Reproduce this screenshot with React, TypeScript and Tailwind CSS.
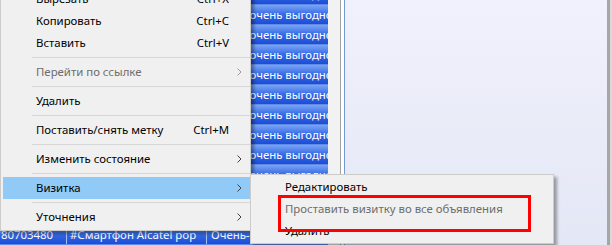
import React from "react";

type Item =
  | { sep: true }
  | { label: string; shortcut?: string; sub?: boolean; disabled?: boolean; active?: boolean };

const mainItems: Item[] = [
  { label: "Вырезать", shortcut: "Ctrl+X" },
  { label: "Копировать", shortcut: "Ctrl+C" },
  { label: "Вставить", shortcut: "Ctrl+V" },
  { sep: true },
  { label: "Перейти по ссылке", sub: true, disabled: true },
  { sep: true },
  { label: "Удалить" },
  { sep: true },
  { label: "Поставить/снять метку", shortcut: "Ctrl+M" },
  { sep: true },
  { label: "Изменить состояние", sub: true },
  { sep: true },
  { label: "Визитка", sub: true, active: true },
  { sep: true },
  { label: "Уточнения", sub: true },
];

const subItems: Item[] = [
  { label: "Редактировать" },
  { label: "Проставить визитку во все объявления", disabled: true },
  { label: "Удалить" },
];

function Chevron({ disabled }: { disabled?: boolean }) {
  return (
    <svg width="5" height="8" viewBox="0 0 5 8" className="shrink-0">
      <path d="M0.5 0.5 L4 4 L0.5 7.5" fill="none" stroke={disabled ? "#9a9a9a" : "#404040"} strokeWidth="1" />
    </svg>
  );
}

function MenuRow({ item }: { item: Item }) {
  if ("sep" in item) {
    return (
      <div className="h-[7px] flex flex-col justify-center pl-[29px]">
        <div className="h-px bg-[#d7d7d7]" />
      </div>
    );
  }
  return (
    <div
      className={`h-[22px] flex items-center pl-[33px] pr-[8px] ${
        item.active ? "bg-[#91c9f7]" : ""
      } ${item.disabled ? "text-[#6d6d6d]" : "text-black"}`}
    >
      <span className="flex-1 whitespace-nowrap">{item.label}</span>
      {item.shortcut && <span className="mr-[13px] whitespace-nowrap">{item.shortcut}</span>}
      {item.sub && <Chevron disabled={item.disabled} />}
    </div>
  );
}

function GridRow({ last }: { last?: boolean }) {
  return (
    <div className="h-[20px] flex text-white">
      <div className="w-[328px] flex bg-gradient-to-b from-[#7aa4f5] via-[#3569e6] to-[#1a4dd5] border-b border-[#5f8ae8]">
        <div className="w-[67px] overflow-hidden whitespace-nowrap flex items-center pl-[1px] border-r border-[#a9c1f3]">
          {last ? "80703480" : ""}
        </div>
        <div className="w-[140px] overflow-hidden whitespace-nowrap flex items-center pl-[3px] border-r border-[#a9c1f3]">
          #Смартфон Alcatel pop
        </div>
        <div className="flex-1 overflow-hidden whitespace-nowrap flex items-center pl-[4px]">
          Очень-очень выгодное
        </div>
      </div>
      <div className="flex-1 bg-[#f2f2f2]" />
    </div>
  );
}

export default function App() {
  return (
    <div
      className="relative w-[612px] h-[245px] overflow-hidden text-[11.4px] leading-none"
      style={{ fontFamily: '"Noto Sans", "Open Sans", sans-serif' }}
    >
      {/* background window */}
      <div className="flex h-full">
        <div className="w-[340px] flex flex-col mt-[-15px] bg-[#f2f2f2]">
          {Array.from({ length: 13 }).map((_, i) => (
            <GridRow key={i} last={i === 12} />
          ))}
        </div>
        <div className="w-px bg-[#a0a0a0]" />
        <div className="w-[3px] bg-white" />
        <div className="w-px bg-[#6f9ad6]" />
        <div className="flex-1 bg-gradient-to-b from-[#f0f1fc] to-[#e4e7f5]" />
        <div className="w-[3px] bg-[#a6a6a6]" />
        <div className="w-[2px] bg-[#d9d9d9]" />
      </div>

      {/* main context menu */}
      <div className="absolute left-0 top-[-15px] w-[251px] bg-[#f0f0f0] border border-[#cccccc] py-[2px] pl-[2px] shadow-[3px_3px_3px_rgba(0,0,0,0.35)]">
        {mainItems.map((it, i) => (
          <MenuRow key={i} item={it} />
        ))}
      </div>

      {/* submenu */}
      <div className="absolute left-[250px] top-[174px] w-[304px] bg-[#f0f0f0] border border-[#cccccc] py-[1px] pl-[1px] shadow-[3px_3px_3px_rgba(0,0,0,0.35)]">
        {subItems.map((it, i) => (
          <MenuRow key={i} item={it} />
        ))}
      </div>

      {/* red highlight frame */}
      <div className="absolute left-[278px] top-[195px] w-[253px] h-[37px] border-[3px] border-[#ff0000]" />
    </div>
  );
}
